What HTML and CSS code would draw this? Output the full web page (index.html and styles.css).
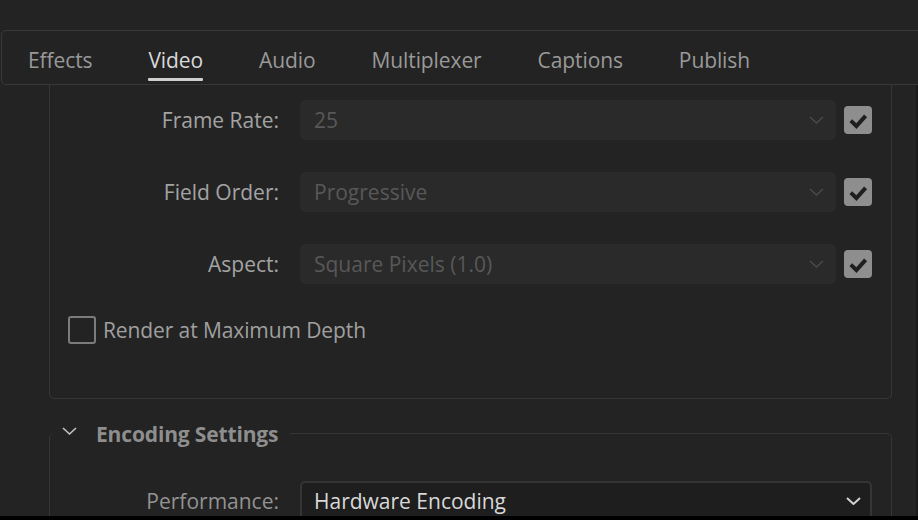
FILE: index.html
```html
<!DOCTYPE html>
<html lang="en">
<head>
<meta charset="utf-8">
<title>Export Settings - Video</title>
<link rel="stylesheet" href="styles.css">
</head>
<body>
<div class="app">
  <nav class="tabs">
    <div class="tab">Effects</div>
    <div class="tab active">Video</div>
    <div class="tab">Audio</div>
    <div class="tab">Multiplexer</div>
    <div class="tab">Captions</div>
    <div class="tab">Publish</div>
  </nav>

  <div class="scroll">
    <div class="content">
      <section class="group group-basic">
        <div class="row">
          <span class="label">Frame Rate:</span>
          <div class="select disabled">
            <span class="value">25</span>
            <svg class="chev" width="15" height="8" viewBox="0 0 15 8"><polyline points="1,1 7.5,7 14,1"/></svg>
          </div>
          <span class="check on"><svg width="28" height="28" viewBox="0 0 28 28"><polyline points="6.8,14.6 12.4,20.2 21.6,9.8"/></svg></span>
        </div>
        <div class="row">
          <span class="label">Field Order:</span>
          <div class="select disabled">
            <span class="value">Progressive</span>
            <svg class="chev" width="15" height="8" viewBox="0 0 15 8"><polyline points="1,1 7.5,7 14,1"/></svg>
          </div>
          <span class="check on"><svg width="28" height="28" viewBox="0 0 28 28"><polyline points="6.8,14.6 12.4,20.2 21.6,9.8"/></svg></span>
        </div>
        <div class="row">
          <span class="label">Aspect:</span>
          <div class="select disabled">
            <span class="value">Square Pixels (1.0)</span>
            <svg class="chev" width="15" height="8" viewBox="0 0 15 8"><polyline points="1,1 7.5,7 14,1"/></svg>
          </div>
          <span class="check on"><svg width="28" height="28" viewBox="0 0 28 28"><polyline points="6.8,14.6 12.4,20.2 21.6,9.8"/></svg></span>
        </div>
        <label class="checkrow">
          <span class="check off"></span>
          <span class="checktext">Render at Maximum Depth</span>
        </label>
      </section>

      <fieldset class="group group-encoding">
        <legend class="legend">
          <svg class="legend-chev" width="15" height="8" viewBox="0 0 15 8"><polyline points="1,1 7.5,7 14,1"/></svg>
          <span class="legend-text">Encoding Settings</span>
        </legend>
        <div class="row">
          <span class="label dim">Performance:</span>
          <div class="select active">
            <span class="value">Hardware Encoding</span>
            <svg class="chev" width="15" height="8" viewBox="0 0 15 8"><polyline points="1,1 7.5,7 14,1"/></svg>
          </div>
        </div>
      </fieldset>
    </div>
    <div class="scrollbar"></div>
  </div>

  <div class="bottombar"></div>
</div>
</body>
</html>
```

FILE: styles.css
```css
* {
  box-sizing: border-box;
}

html, body {
  margin: 0;
  padding: 0;
  background: #232323;
}

body {
  font-family: "Open Sans", "Liberation Sans", sans-serif;
  font-size: 21px;
  color: #a3a3a3;
  overflow: hidden;
}

.app {
  width: 918px;
  height: 520px;
  display: flex;
  flex-direction: column;
  overflow: hidden;
}

/* Tabs */
.tabs {
  flex: 0 0 55px;
  height: 55px;
  margin: 30px -20px 0 1px;
  border: 1px solid #383838;
  border-radius: 5px;
  display: flex;
  gap: 56px;
  padding-left: 26px;
}

.tab {
  display: flex;
  flex-direction: column;
  padding-top: 15px;
  line-height: 28px;
  color: #999999;
  white-space: nowrap;
  letter-spacing: -0.1px;
}

.tab::after {
  content: "";
  display: block;
  height: 3px;
  margin-top: 4px;
  border-radius: 1px;
}

.tab.active {
  color: #d9d9d9;
}

.tab.active::after {
  background: #cfcfcf;
}

/* Scroll area */
.scroll {
  flex: 1 1 auto;
  display: flex;
  overflow: hidden;
  min-height: 0;
}

.content {
  flex: 1 1 auto;
  padding: 0 24px 0 49px;
}

.scrollbar {
  flex: 0 0 2px;
  background: #1a1a1a;
}

.bottombar {
  flex: 0 0 4px;
  background: #000000;
}

/* Groups */
.group {
  border: 1px solid #363636;
}

.group-basic {
  border-top: none;
  border-radius: 0 0 5px 5px;
  padding: 15px 19px 54px 0;
  display: flex;
  flex-direction: column;
  gap: 32px;
}

.row {
  display: flex;
  align-items: center;
  height: 40px;
}

.label {
  flex: 0 0 229px;
  margin-right: 21px;
  text-align: right;
  line-height: 40px;
  color: #a3a3a3;
  white-space: nowrap;
}

.label.dim {
  color: #929292;
}

.select {
  flex: 1 1 auto;
  height: 40px;
  display: flex;
  align-items: center;
  justify-content: space-between;
  border-radius: 5px;
  padding: 0 12px 0 14px;
}

.select .value {
  line-height: 40px;
  white-space: nowrap;
}

.select .chev polyline {
  fill: none;
  stroke-width: 1.5;
}

.select.disabled {
  background: #2a2a2a;
  color: #585858;
}

.select.disabled .chev polyline {
  stroke: #4a4a4a;
}

.select.active {
  background: #1e1e1e;
  border: 2px solid #353535;
  color: #d8d8d8;
  padding: 0 9px 0 12px;
}

.select.active .chev polyline {
  stroke: #d2d2d2;
  stroke-width: 2;
}

.check {
  flex: 0 0 28px;
  width: 28px;
  height: 28px;
  border-radius: 4px;
  display: block;
}

.row .check {
  margin-left: 8px;
}

.check.on {
  background: #8e8e8e;
}

.check.on svg {
  display: block;
}

.check.on polyline {
  fill: none;
  stroke: #1f1f1f;
  stroke-width: 4;
}

.check.off {
  border: 2px solid #7c7c7c;
  border-radius: 3px;
}

.checkrow {
  display: flex;
  align-items: center;
  height: 28px;
  margin-left: 18px;
  gap: 7px;
}

.checktext {
  line-height: 28px;
  color: #a0a0a0;
  white-space: nowrap;
  letter-spacing: -0.1px;
}

/* Encoding fieldset */
.group-encoding {
  margin: 19px 0 0 0;
  border-radius: 5px;
  padding: 0 19px 40px 0;
  min-width: 0;
}

.group-encoding .row {
  margin-top: 32px;
}

.legend {
  display: flex;
  align-items: flex-start;
  margin-left: 2px;
  padding: 2px 12px 0 10px;
  line-height: 29px;
}

.legend-chev {
  margin-top: 7px;
  margin-right: 19px;
  flex: 0 0 15px;
}

.legend-chev polyline {
  fill: none;
  stroke: #c2c2c2;
  stroke-width: 1.6;
}

.legend-text {
  font-weight: 700;
  color: #8e8e8e;
  white-space: nowrap;
  letter-spacing: -0.15px;
}
```
